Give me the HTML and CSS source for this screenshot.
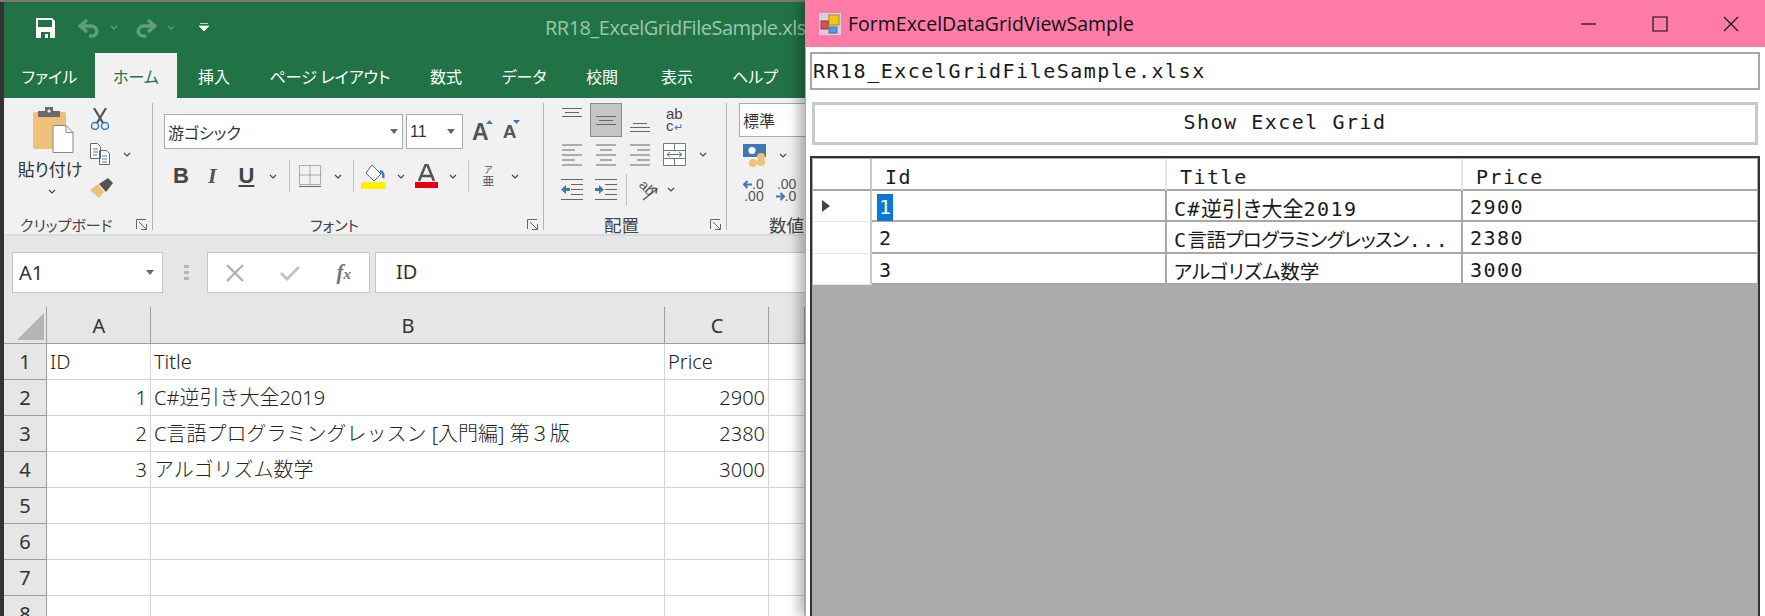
FILE: index.html
```html
<!DOCTYPE html>
<html lang="ja">
<head>
    <meta charset="UTF-8">
    <title>FormExcelDataGridViewSample</title>
    <link rel="stylesheet" href="styles.css">
</head>
<body>
<div class="excel">
    <div class="titlebar">
        <svg class="qa-save" width="20" height="20" viewBox="0 0 20 20"><path d="M0 0h16l3 3v17H0z" fill="#fff"/><path d="M2 2h14v7H2z" fill="#217346"/><path d="M5 14h9v6h-2v-4H9v4H5z" fill="#217346"/></svg>
        <svg class="qa-undo" width="22" height="20" viewBox="0 0 22 20"><path d="M9 2L2 8l7 6M3 8h10c7 0 8 10 1 10h-3" fill="none" stroke="#5f9d7d" stroke-width="3.4"/></svg>
        <svg class="qa-chev" width="8" height="5" viewBox="0 0 8 5"><path d="M1 1l3 3 3-3" fill="none" stroke="#5f9d7d" stroke-width="1.2"/></svg>
        <svg class="qa-redo" width="22" height="20" viewBox="0 0 22 20"><path d="M13 2l7 6-7 6M19 8H9c-7 0-8 9-1 10h3" fill="none" stroke="#5f9d7d" stroke-width="3.4"/></svg>
        <svg class="qa-chev" width="8" height="5" viewBox="0 0 8 5"><path d="M1 1l3 3 3-3" fill="none" stroke="#5f9d7d" stroke-width="1.2"/></svg>
        <svg class="qa-more" width="10" height="9" viewBox="0 0 10 9"><path d="M1 .5h8M0 3h10L5 8z" fill="#fff" stroke="#fff" stroke-width=".7"/></svg>
        <span class="doc-title">RR18_ExcelGridFileSample.xlsx</span>
    </div>
    <div class="tabs">
        <span class="tab tab-file">ファイル</span>
        <span class="tab tab-home">ホーム</span>
        <span class="tab tab-insert">挿入</span>
        <span class="tab tab-layout">ページ レイアウト</span>
        <span class="tab tab-formula">数式</span>
        <span class="tab tab-data">データ</span>
        <span class="tab tab-review">校閲</span>
        <span class="tab tab-view">表示</span>
        <span class="tab tab-help">ヘルプ</span>
    </div>

    <div class="ribbon">
        <section class="group group-clip">
            <div class="group-body clip-body">
                <div class="paste">
                    <svg width="42" height="47" viewBox="0 0 42 47"><path d="M3 5h29a2 2 0 0 1 2 2v33a2 2 0 0 1-2 2H3a2 2 0 0 1-2-2V7a2 2 0 0 1 2-2z" fill="#eec07a"/><path d="M6 4h7V0h8v4h7v6H6z" fill="#6b6b6b"/><circle cx="17" cy="4" r="1.6" fill="#f1f1f1"/><path d="M21 18.500h13l7 7v20H21z" fill="#fff" stroke="#8a8a8a"/><path d="M34 18.500v7h7" fill="none" stroke="#8a8a8a"/></svg>
                    <span class="paste-label">貼り付け</span>
                    <svg class="chev paste-chev" width="8" height="5" viewBox="0 0 8 5"><path d="M1 1l3 3 3-3" fill="none" stroke="#444" stroke-width="1.2"/></svg>
                </div>
                <div class="clip-tools">
                    <svg width="20" height="22" viewBox="0 0 20 22"><path d="M4 0l9 15M16 0L7 15" stroke="#555" stroke-width="2.200" fill="none"/><circle cx="5" cy="18" r="3.500" fill="none" stroke="#3f78b5" stroke-width="1.500"/><circle cx="15" cy="18" r="3.500" fill="none" stroke="#3f78b5" stroke-width="1.500"/></svg>
                    <div class="copy-row">
                        <svg width="21" height="22" viewBox="0 0 21 22"><path d="M.5.500h7l3 3v12H.5zM9.500 7.500h7l3 3v11h-10z" fill="#fff" stroke="#666"/><path d="M3 6h5M3 9h5M3 12h4M12 13h5M12 16h5M12 19h5" stroke="#3f78b5"/></svg>
                        <svg class="chev" width="8" height="5" viewBox="0 0 8 5"><path d="M1 1l3 3 3-3" fill="none" stroke="#444" stroke-width="1.2"/></svg>
                    </div>
                    <svg width="23" height="21" viewBox="0 0 23 21"><path d="M0 12l8-6 6 8-5 6z" fill="#eec07a"/><path d="M9 6l9-6 5 5-7 9z" fill="#555"/></svg>
                </div>
            </div>
            <div class="group-foot">
                <span class="group-label clip-label">クリップボード</span>
                <svg class="launcher" width="11" height="11" viewBox="0 0 11 11"><path d="M.5 10V.5H10M3 3l7 7M5 10.500h5.500V5" fill="none" stroke="#666"/></svg>
            </div>
        </section>

        <section class="group group-font">
            <div class="group-body font-body">
                <div class="font-top">
                    <div class="combo combo-font"><span>游ゴシック</span><i class="caret"></i></div>
                    <div class="combo combo-size"><span>11</span><i class="caret"></i></div>
                    <span class="size-a grow">A<svg width="7" height="4" viewBox="0 0 7 4"><path d="M0 4l3.500-4 3.500 4z" fill="#3f78b5"/></svg></span>
                    <span class="size-a shrink">A<svg width="7" height="4" viewBox="0 0 7 4"><path d="M0 0h7l-3.500 4z" fill="#3f78b5"/></svg></span>
                </div>
                <div class="font-tools">
                    <span class="fmt fmt-b">B</span>
                    <span class="fmt fmt-i">I</span>
                    <span class="fmt fmt-u">U</span>
                    <svg class="chev c-u" width="8" height="5" viewBox="0 0 8 5"><path d="M1 1l3 3 3-3" fill="none" stroke="#444" stroke-width="1.2"/></svg>
                    <i class="vsep s-1"></i>
                    <svg class="borders" width="22" height="22" viewBox="0 0 22 22"><path d="M.5.500h21v19H.5zM11 .5v19M.5 10h21" fill="none" stroke="#666" stroke-dasharray="1 1"/><path d="M0 21.500h22" stroke="#666"/></svg>
                    <svg class="chev c-b" width="8" height="5" viewBox="0 0 8 5"><path d="M1 1l3 3 3-3" fill="none" stroke="#444" stroke-width="1.2"/></svg>
                    <i class="vsep s-2"></i>
                    <svg class="fill" width="25" height="25" viewBox="0 0 25 25"><path d="M11 1l9 9-7 7-8-8z" fill="#fff" stroke="#666"/><path d="M19 7c3 1 4 4 3 7" fill="none" stroke="#3f78b5" stroke-width="2.500"/><rect y="18" width="25" height="7" fill="#fff200"/></svg>
                    <svg class="chev c-f" width="8" height="5" viewBox="0 0 8 5"><path d="M1 1l3 3 3-3" fill="none" stroke="#444" stroke-width="1.2"/></svg>
                    <svg class="color" width="23" height="25" viewBox="0 0 23 25"><path d="M4 17L10.500 1h2L19 17M6.500 12h10" fill="none" stroke="#555" stroke-width="2.500"/><rect y="18" width="23" height="6" fill="#e60012"/></svg>
                    <svg class="chev c-c" width="8" height="5" viewBox="0 0 8 5"><path d="M1 1l3 3 3-3" fill="none" stroke="#444" stroke-width="1.2"/></svg>
                    <i class="vsep s-3"></i>
                    <span class="phonetic"><small>ア</small>亜</span>
                    <svg class="chev c-p" width="8" height="5" viewBox="0 0 8 5"><path d="M1 1l3 3 3-3" fill="none" stroke="#444" stroke-width="1.2"/></svg>
                </div>
            </div>
            <div class="group-foot">
                <span class="group-label font-label">フォント</span>
                <svg class="launcher" width="11" height="11" viewBox="0 0 11 11"><path d="M.5 10V.5H10M3 3l7 7M5 10.500h5.500V5" fill="none" stroke="#666"/></svg>
            </div>
        </section>

        <section class="group group-align">
            <div class="group-body align-body">
                <div class="align-row row-a">
                    <svg class="a-top" width="20" height="9" viewBox="0 0 20 9"><path d="M0 .5h20M3 4.500h14M0 8.500h20" stroke="#666"/></svg>
                    <div class="a-active"><svg width="20" height="9" viewBox="0 0 20 9"><path d="M0 .5h20M3 4.500h14M0 8.500h20" stroke="#666"/></svg></div>
                    <svg class="a-bottom" width="20" height="9" viewBox="0 0 20 9"><path d="M3 .5h14M0 4.500h20M0 8.500h20" stroke="#666"/></svg>
                    <div class="wrap-icon"><span>ab</span><span>c<b>↵</b></span></div>
                </div>
                <div class="align-row row-b">
                    <svg width="20" height="22" viewBox="0 0 20 22"><path d="M0 1h20M0 6h13M0 11h20M0 16h13M0 21h20" stroke="#666"/></svg>
                    <svg class="gap-14" width="20" height="22" viewBox="0 0 20 22"><path d="M0 1h20M4 6h12M0 11h20M4 16h12M0 21h20" stroke="#666"/></svg>
                    <svg class="gap-14" width="20" height="22" viewBox="0 0 20 22"><path d="M0 1h20M7 6h13M0 11h20M7 16h13M0 21h20" stroke="#666"/></svg>
                    <svg class="merge" width="23" height="23" viewBox="0 0 23 23"><path d="M.5.500h22v22H.5zM.5 7.500h22M.5 15.500h22M11.500.5v7M11.500 15.500v7" fill="#fff" stroke="#777"/><path d="M4 11.500h15M7 9l-3 2.500L7 14M16 9l3 2.500L16 14" fill="none" stroke="#3f78b5"/></svg>
                    <svg class="chev c-m" width="8" height="5" viewBox="0 0 8 5"><path d="M1 1l3 3 3-3" fill="none" stroke="#444" stroke-width="1.2"/></svg>
                </div>
                <div class="align-row row-c">
                    <svg width="22" height="21" viewBox="0 0 22 21"><path d="M0 .5h22M10 5.500h12M10 10.500h12M10 15.500h12M0 20.500h22" stroke="#666"/><path d="M0 10.500L5 6v3h4v3H5v3z" fill="#3f78b5"/></svg>
                    <svg class="gap-12" width="22" height="21" viewBox="0 0 22 21"><path d="M0 .5h22M10 5.500h12M10 10.500h12M10 15.500h12M0 20.500h22" stroke="#666"/><path d="M9 10.500L4 6v3H0v3h4v3z" fill="#3f78b5"/></svg>
                    <i class="vsep s-4"></i>
                    <span class="orient"><span class="orient-ab">ab</span><svg width="17" height="15" viewBox="0 0 17 15"><path d="M1 14L15 3M10 2l5 .5-1 5" fill="none" stroke="#555" stroke-width="1.300"/></svg></span>
                    <svg class="chev c-o" width="8" height="5" viewBox="0 0 8 5"><path d="M1 1l3 3 3-3" fill="none" stroke="#444" stroke-width="1.2"/></svg>
                </div>
            </div>
            <div class="group-foot">
                <span class="group-label align-label">配置</span>
                <svg class="launcher" width="11" height="11" viewBox="0 0 11 11"><path d="M.5 10V.5H10M3 3l7 7M5 10.500h5.500V5" fill="none" stroke="#666"/></svg>
            </div>
        </section>

        <section class="group group-num">
            <div class="group-body num-body">
                <div class="combo combo-num"><span>標準</span></div>
                <div class="num-row">
                    <svg width="24" height="23" viewBox="0 0 24 23"><rect width="23" height="13" fill="#3f78b5"/><circle cx="9" cy="6.500" r="3.500" fill="#fff"/><circle cx="18" cy="13" r="4" fill="#eec07a"/><circle cx="10" cy="19" r="4" fill="#eec07a"/><circle cx="18" cy="18" r="4" fill="#eec07a"/></svg>
                    <svg class="chev c-n" width="8" height="5" viewBox="0 0 8 5"><path d="M1 1l3 3 3-3" fill="none" stroke="#444" stroke-width="1.2"/></svg>
                </div>
                <div class="num-row decimals">
                    <div class="dec"><span><svg width="9" height="9" viewBox="0 0 9 9"><path d="M4.500 1L1 4.500 4.500 8M1 4.500h8" fill="none" stroke="#3f78b5" stroke-width="2"/></svg>.0</span><span>.00</span></div>
                    <div class="dec"><span>.00</span><span><svg width="9" height="9" viewBox="0 0 9 9"><path d="M4.500 1L8 4.500 4.500 8M8 4.500H0" fill="none" stroke="#3f78b5" stroke-width="2"/></svg>.0</span></div>
                </div>
            </div>
            <div class="group-foot"><span class="group-label num-label">数値</span></div>
        </section>
    </div>

    <div class="formula-bar">
        <div class="name-box"><span>A1</span><i class="caret"></i></div>
        <div class="grip"></div>
        <div class="fx-box">
            <svg width="18" height="18" viewBox="0 0 18 18"><path d="M1 1l16 16M17 1L1 17" stroke="#b0b0b0" stroke-width="2.400"/></svg>
            <svg width="20" height="16" viewBox="0 0 20 16"><path d="M1 8l6 6L19 2" fill="none" stroke="#c4c4c4" stroke-width="3"/></svg>
            <span class="fx">f<sub>x</sub></span>
        </div>
        <div class="formula-input">ID</div>
    </div>

    <div class="sheet">
        <div class="corner"><i></i></div>
        <div class="col-head">A</div>
        <div class="col-head">B</div>
        <div class="col-head">C</div>
        <div class="col-head"></div>

        <div class="row-head">1</div><div class="cell">ID</div><div class="cell">Title</div><div class="cell">Price</div><div class="cell"></div>
        <div class="row-head">2</div><div class="cell num">1</div><div class="cell">C#逆引き大全2019</div><div class="cell num">2900</div><div class="cell"></div>
        <div class="row-head">3</div><div class="cell num">2</div><div class="cell">C言語プログラミングレッスン [入門編] 第３版</div><div class="cell num">2380</div><div class="cell"></div>
        <div class="row-head">4</div><div class="cell num">3</div><div class="cell">アルゴリズム数学</div><div class="cell num">3000</div><div class="cell"></div>
        <div class="row-head">5</div><div class="cell"></div><div class="cell"></div><div class="cell"></div><div class="cell"></div>
        <div class="row-head">6</div><div class="cell"></div><div class="cell"></div><div class="cell"></div><div class="cell"></div>
        <div class="row-head">7</div><div class="cell"></div><div class="cell"></div><div class="cell"></div><div class="cell"></div>
        <div class="row-head">8</div><div class="cell"></div><div class="cell"></div><div class="cell"></div><div class="cell"></div>
    </div>
</div>

<div class="form">
    <div class="form-title">
        <svg class="form-icon" width="22" height="22" viewBox="0 0 22 22"><rect width="22" height="22" fill="#d8d0dc"/><rect x="10" y="2" width="10" height="10" fill="#f5c518" stroke="#a88a20"/><rect x="2" y="8" width="7" height="8" fill="#d9534f" stroke="#a33"/><rect x="10" y="14" width="8" height="6" fill="#5b9bd5" stroke="#3a6ea5"/></svg>
        <span class="form-caption">FormExcelDataGridViewSample</span>
        <div class="win-btns">
            <svg width="16" height="16" viewBox="0 0 16 16"><path d="M0 8h15" stroke="#111" stroke-width="1.200"/></svg>
            <svg width="16" height="16" viewBox="0 0 16 16"><path d="M1 1h14v14H1z" fill="none" stroke="#111" stroke-width="1.200"/></svg>
            <svg width="16" height="16" viewBox="0 0 16 16"><path d="M1 1l14 14M15 1L1 15" stroke="#111" stroke-width="1.200"/></svg>
        </div>
    </div>
    <div class="form-body">
        <div class="textbox">RR18_ExcelGridFileSample.xlsx</div>
        <div class="show-btn">Show Excel Grid</div>
        <div class="grid">
            <div class="dgv-rows">
                <div class="dgv-row dgv-head">
                    <div class="rh"></div>
                    <div class="dc c-id">Id</div>
                    <div class="dc c-title">Title</div>
                    <div class="dc c-price">Price</div>
                </div>
                <div class="dgv-row">
                    <div class="rh"><i class="row-arrow"></i></div>
                    <div class="dc c-id"><span class="selected">1</span></div>
                    <div class="dc c-title">C#<span class="ja wide">逆引き大全</span>2019</div>
                    <div class="dc c-price">2900</div>
                </div>
                <div class="dgv-row">
                    <div class="rh"></div>
                    <div class="dc c-id">2</div>
                    <div class="dc c-title">C<span class="ja tight">言語プログラミングレッスン</span>...</div>
                    <div class="dc c-price">2380</div>
                </div>
                <div class="dgv-row">
                    <div class="rh"></div>
                    <div class="dc c-id">3</div>
                    <div class="dc c-title"><span class="ja">アルゴリズム数学</span></div>
                    <div class="dc c-price">3000</div>
                </div>
            </div>
        </div>
    </div>
</div>
</body>
</html>
```

FILE: styles.css
```css
* {
    box-sizing: border-box;
}

html, body {
    margin: 0;
    height: 100%;
}

body {
    display: flex;
    width: 1765px;
    height: 616px;
    overflow: hidden;
    background: linear-gradient(#7a7a7a 2px, #333 2px);
    font-family: "Noto Sans CJK JP", sans-serif;
}

/* excel window */
.excel {
    width: 801px;
    flex: none;
    overflow: hidden;
    margin: 2px 0 0 4px;
    background: #fff;
    color: #333;
    font-feature-settings: "palt";
}

.titlebar {
    display: flex;
    align-items: center;
    height: 51px;
    background: #217346;
    white-space: nowrap;
}

.titlebar svg {
    flex: none;
}

.qa-save { margin-left: 32px; }
.qa-undo { margin-left: 22px; }
.qa-redo { margin-left: 17px; }
.qa-chev { margin-left: 10px; }
.qa-more { margin-left: 24px; }

.doc-title {
    flex: none;
    margin-left: 336px;
    font-family: "Open Sans", sans-serif;
    font-size: 20px;
    letter-spacing: -0.5px;
    color: #9cc7ae;
}

.tabs {
    display: flex;
    height: 45px;
    background: #217346;
    color: #fff;
    font-size: 16px;
}

.tab {
    display: flex;
    align-items: center;
    justify-content: center;
    flex: none;
    height: 45px;
    white-space: nowrap;
}

.tab-file { width: 91px; }
.tab-home { width: 82px; background: #f1f1f1; color: #217346; }
.tab-insert { width: 74px; }
.tab-layout { width: 158px; }
.tab-formula { width: 74px; }
.tab-data { width: 82px; }
.tab-review { width: 74px; }
.tab-view { width: 76px; }
.tab-help { width: 80px; }

.ribbon {
    display: flex;
    height: 138px;
    background: #f1f1f1;
    border-bottom: 2px solid #dcdcdc;
    padding-top: 5px;
}

.group {
    display: flex;
    flex-direction: column;
    flex: none;
    height: 127px;
    border-right: 1px solid #b5b5b5;
}

.group-clip { width: 149px; }
.group-font { width: 391px; }
.group-align { width: 183px; }
.group-num { width: 78px; border-right: 0; }

.group-body {
    flex: 1;
    min-height: 0;
}

.group-foot {
    display: flex;
    align-items: center;
    flex: none;
    height: 22px;
    margin-bottom: -5px;
    font-size: 15px;
    color: #444;
}

.group-label {
    white-space: nowrap;
}

.launcher {
    margin-left: auto;
    margin-right: 5px;
}

.clip-label { margin-left: 16px; }
.font-label { margin-left: 157px; }
.align-label { margin-left: 60px; font-size: 17.5px; }
.num-label { margin-left: 42px; font-size: 17.5px; }

.chev {
    flex: none;
}

.caret {
    width: 0;
    height: 0;
    flex: none;
    border: 4px solid transparent;
    border-top: 5px solid #666;
    border-bottom: 0;
}

/* clipboard */
.clip-body {
    display: flex;
}

.paste {
    display: flex;
    flex-direction: column;
    align-items: center;
    width: 84px;
    padding-left: 14px;
    padding-top: 4px;
}

.paste-label {
    margin-top: 4px;
    margin-left: -6px;
    font-size: 17px;
    line-height: 22px;
    color: #333;
    white-space: nowrap;
}

.paste-chev {
    margin-top: 9px;
    margin-left: -2px;
}

.clip-tools {
    display: flex;
    flex-direction: column;
    gap: 13px;
    padding-top: 5px;
    margin-left: 2px;
}

.copy-row {
    display: flex;
    align-items: center;
    gap: 12px;
}

/* font */
.font-body {
    padding-top: 11px;
}

.font-top {
    display: flex;
    align-items: center;
    height: 35px;
    margin-left: 11px;
}

.combo {
    display: flex;
    align-items: center;
    flex: none;
    background: #fff;
    border: 1px solid #ababab;
    font-size: 16px;
    color: #333;
}

.combo .caret { margin-left: auto; }

.combo-font {
    width: 239px;
    height: 35px;
    padding: 0 4px 0 3px;
    margin-right: 3px;
}

.combo-size {
    width: 57px;
    height: 35px;
    padding: 0 7px 0 3px;
    font-family: "Liberation Sans", sans-serif;
}

.size-a {
    display: flex;
    align-items: flex-start;
    font-family: "Liberation Sans", sans-serif;
    font-weight: bold;
    line-height: 24px;
    color: #555;
}

.size-a svg {
    margin-left: -3px;
}

.grow { margin-left: 9px; font-size: 23px; }
.shrink { margin-left: 10px; font-size: 19px; }

.font-tools {
    display: flex;
    align-items: center;
    height: 36px;
    margin-top: 9px;
}

.fmt {
    font-family: "Liberation Sans", sans-serif;
    font-size: 22px;
    font-weight: bold;
    color: #444;
    line-height: 1;
}

.fmt-b { margin-left: 20px; }
.fmt-i { margin-left: 19px; font-family: "Liberation Serif", serif; font-style: italic; color: #555; }
.fmt-u { margin-left: 22px; text-decoration: underline; }

.c-u { margin-left: 15px; }

.vsep {
    display: block;
    flex: none;
    width: 1px;
    height: 32px;
    background: #c6c6c6;
}

.s-1 { margin-left: 12px; }
.borders { margin-left: 9px; }
.c-b { margin-left: 13px; }
.s-2 { margin-left: 11px; }
.fill { margin-left: 7px; }
.c-f { margin-left: 11px; }
.color { margin-left: 10px; }
.c-c { margin-left: 11px; }
.s-3 { margin-left: 11px; }

.phonetic {
    display: flex;
    flex-direction: column;
    align-items: center;
    margin-left: 13px;
    font-size: 12px;
    line-height: 12px;
    color: #555;
}

.phonetic small {
    font-size: 9px;
    line-height: 10px;
}

.c-p { margin-left: 17px; }

/* alignment */
.align-body {
    display: flex;
    flex-direction: column;
}

.align-row {
    display: flex;
    align-items: center;
    flex: none;
}

.row-a {
    height: 34px;
    padding-left: 18px;
}

.row-a .a-top { align-self: flex-start; margin-top: 5px; }

.a-active {
    display: flex;
    align-items: center;
    justify-content: center;
    width: 32px;
    height: 34px;
    margin-left: 8px;
    background: #c5c5c5;
    border: 1px solid #8c8c8c;
}

.a-bottom {
    align-self: flex-end;
    margin-left: 8px;
    margin-bottom: 5px;
}

.wrap-icon {
    display: flex;
    flex-direction: column;
    margin-left: 16px;
    font-family: "Liberation Sans", sans-serif;
    font-size: 15px;
    line-height: 12px;
    color: #444;
}

.wrap-icon b {
    color: #3f78b5;
    font-weight: normal;
    font-size: 11px;
}

.row-b {
    height: 23px;
    margin-top: 6px;
    padding-left: 18px;
}

.gap-14 { margin-left: 14px; }
.merge { margin-left: 13px; }
.c-m { margin-left: 13px; }

.row-c {
    height: 21px;
    margin-top: 13px;
    padding-left: 17px;
}

.gap-12 { margin-left: 12px; }
.s-4 { margin-left: 9px; }

.orient {
    display: flex;
    width: 22px;
    height: 22px;
    margin-left: 10px;
}

.orient-ab {
    flex: none;
    width: 14px;
    font-family: "Liberation Sans", sans-serif;
    font-size: 14px;
    line-height: 14px;
    color: #555;
    transform: rotate(45deg);
}

.orient svg {
    flex: none;
    align-self: flex-end;
    margin-left: -9px;
}

.c-o { margin-left: 8px; }

/* number */
.num-body {
    display: flex;
    flex-direction: column;
    padding-left: 12px;
}

.combo-num {
    width: 90px;
    height: 34px;
    padding-left: 3px;
    font-size: 16px;
}

.num-row {
    display: flex;
    align-items: center;
    margin-top: 7px;
    padding-left: 4px;
}

.c-n { margin-left: 12px; }

.decimals {
    gap: 12px;
    margin-top: 11px;
}

.dec {
    display: flex;
    flex-direction: column;
    align-items: flex-end;
    font-family: "Liberation Sans", sans-serif;
    font-size: 14px;
    line-height: 12px;
    color: #555;
}

/* formula bar */
.formula-bar {
    display: flex;
    height: 57px;
    background: #e6e6e6;
    padding-top: 16px;
}

.name-box {
    display: flex;
    align-items: center;
    width: 151px;
    height: 41px;
    margin-left: 8px;
    padding: 0 8px 0 6px;
    background: #fff;
    border: 1px solid #c6c6c6;
    font-family: "Noto Sans", sans-serif;
    font-size: 20px;
}

.name-box .caret { margin-left: auto; }

.grip {
    width: 5px;
    height: 15px;
    margin: 13px 18px 0 21px;
    background: repeating-linear-gradient(#b5b5b5 0 3px, transparent 3px 6px);
}

.fx-box {
    display: flex;
    align-items: center;
    justify-content: space-between;
    width: 163px;
    height: 41px;
    padding: 0 18px;
    background: #fff;
    border: 1px solid #c6c6c6;
}

.fx {
    font-family: "Liberation Serif", serif;
    font-style: italic;
    font-weight: bold;
    font-size: 21px;
    color: #777;
}

.fx sub {
    font-size: 15px;
    vertical-align: baseline;
}

.formula-input {
    flex: 1;
    height: 41px;
    margin-left: 5px;
    padding-left: 20px;
    background: #fff;
    border: 1px solid #c6c6c6;
    border-right: 0;
    font-family: "Noto Sans", sans-serif;
    font-size: 20px;
    line-height: 38px;
}

/* sheet */
.sheet {
    display: grid;
    grid-template-columns: 43px 104px 514px 104px 36px;
    grid-template-rows: 51px repeat(8, 36px);
    font-feature-settings: normal;
}

.corner {
    display: flex;
    align-items: flex-end;
    justify-content: flex-end;
    padding: 0 3px 3px 0;
    background-color: #e6e6e6;
    border-bottom: 1px solid #9e9e9e;
}

.corner i {
    width: 27px;
    height: 27px;
    background: #b5b5b5;
    clip-path: polygon(100% 0, 100% 100%, 0 100%);
}

/* the separators only reach up part of the header */
.col-head,
.corner {
    background-image: linear-gradient(#9e9e9e, #9e9e9e);
    background-size: 1px 36px;
    background-position: right bottom;
    background-repeat: no-repeat;
}

.col-head {
    display: flex;
    align-items: flex-end;
    justify-content: center;
    background-color: #e6e6e6;
    border-bottom: 1px solid #9e9e9e;
    font-family: "Noto Sans", sans-serif;
    font-size: 20px;
    line-height: 34px;
}

.row-head {
    display: flex;
    align-items: center;
    justify-content: center;
    background: #e6e6e6;
    border-right: 1px solid #9e9e9e;
    border-bottom: 1px solid #9e9e9e;
    font-family: "Noto Sans", sans-serif;
    font-size: 20px;
}

.cell {
    padding: 0 3px;
    border-right: 1px solid #d4d4d4;
    border-bottom: 1px solid #d4d4d4;
    font-family: "Noto Sans", "Noto Sans CJK JP", sans-serif;
    font-weight: 300;
    font-size: 20px;
    line-height: 36px;
    color: #222;
    white-space: nowrap;
}

.cell.num {
    text-align: right;
}

/* winforms window */
.form {
    position: relative;
    flex: none;
    width: 960px;
    height: 616px;
    background: #fff;
    border-left: 1px solid #ff7ba8;
    box-shadow: -6px 0 12px rgba(0, 0, 0, 0.3);
}

.form-title {
    display: flex;
    align-items: center;
    height: 47px;
    margin-left: -1px;
    padding-left: 14px;
    background: #ff7ba8;
    color: #111;
}

.form-caption {
    margin-left: 7px;
    font-family: "Open Sans", sans-serif;
    font-size: 19.5px;
}

.win-btns {
    display: flex;
    gap: 55px;
    margin-left: auto;
    margin-right: 26px;
}

.form-body {
    display: flex;
    flex-direction: column;
    padding: 5px 5px 0 4px;
    font-family: "DejaVu Sans Mono", monospace;
    font-size: 20px;
    letter-spacing: 1.5px;
    color: #1a1a1a;
}

.textbox {
    height: 38px;
    padding-left: 1px;
    border: 2px solid #a6a6a6;
    background: #fff;
    line-height: 34px;
}

.show-btn {
    height: 43px;
    margin: 12px 2px 0;
    border: 3px solid #c9c9c9;
    background: #fff;
    text-align: center;
    line-height: 35px;
}

.grid {
    height: 470px;
    margin-top: 11px;
    padding: 1px;
    border: 2px solid #333;
    background: #ababab;
}

.dgv-rows {
    background: #fff;
}

.dgv-row {
    display: flex;
    height: 31.4px;
}

.dgv-head {
    height: 32px;
}

.rh {
    display: flex;
    align-items: center;
    width: 59px;
    flex: none;
    padding-left: 9px;
    border-bottom: 1px solid #e6e6e6;
    border-right: 2px solid #c9c9c9;
}

.dgv-head .rh {
    border-bottom: 2px solid #a8a8a8;
}

.row-arrow {
    width: 0;
    height: 0;
    border-left: 8px solid #444;
    border-top: 6px solid transparent;
    border-bottom: 6px solid transparent;
}

.dc {
    flex: none;
    padding-left: 7px;
    border-right: 2px solid #a8a8a8;
    border-bottom: 2px solid #a8a8a8;
    line-height: 33px;
    white-space: nowrap;
}

.c-id { width: 295px; }
.c-title { width: 296px; }
.c-price { flex: 1; border-right: 0; }

.dgv-head .dc {
    padding-left: 13px;
    border-right-color: #e8e8e8;
    line-height: 36px;
}

.selected {
    display: inline-block;
    background: #0a78d7;
    color: #fff;
    padding-left: 2px;
    line-height: 27px;
    margin-left: -2px;
}

.ja {
    font-family: "Noto Sans CJK JP", sans-serif;
    font-size: 19.5px;
    letter-spacing: 0;
    font-feature-settings: "palt";
}

.ja.wide {
    font-size: 21px;
}

.ja.tight {
    letter-spacing: -0.6px;
}
```
